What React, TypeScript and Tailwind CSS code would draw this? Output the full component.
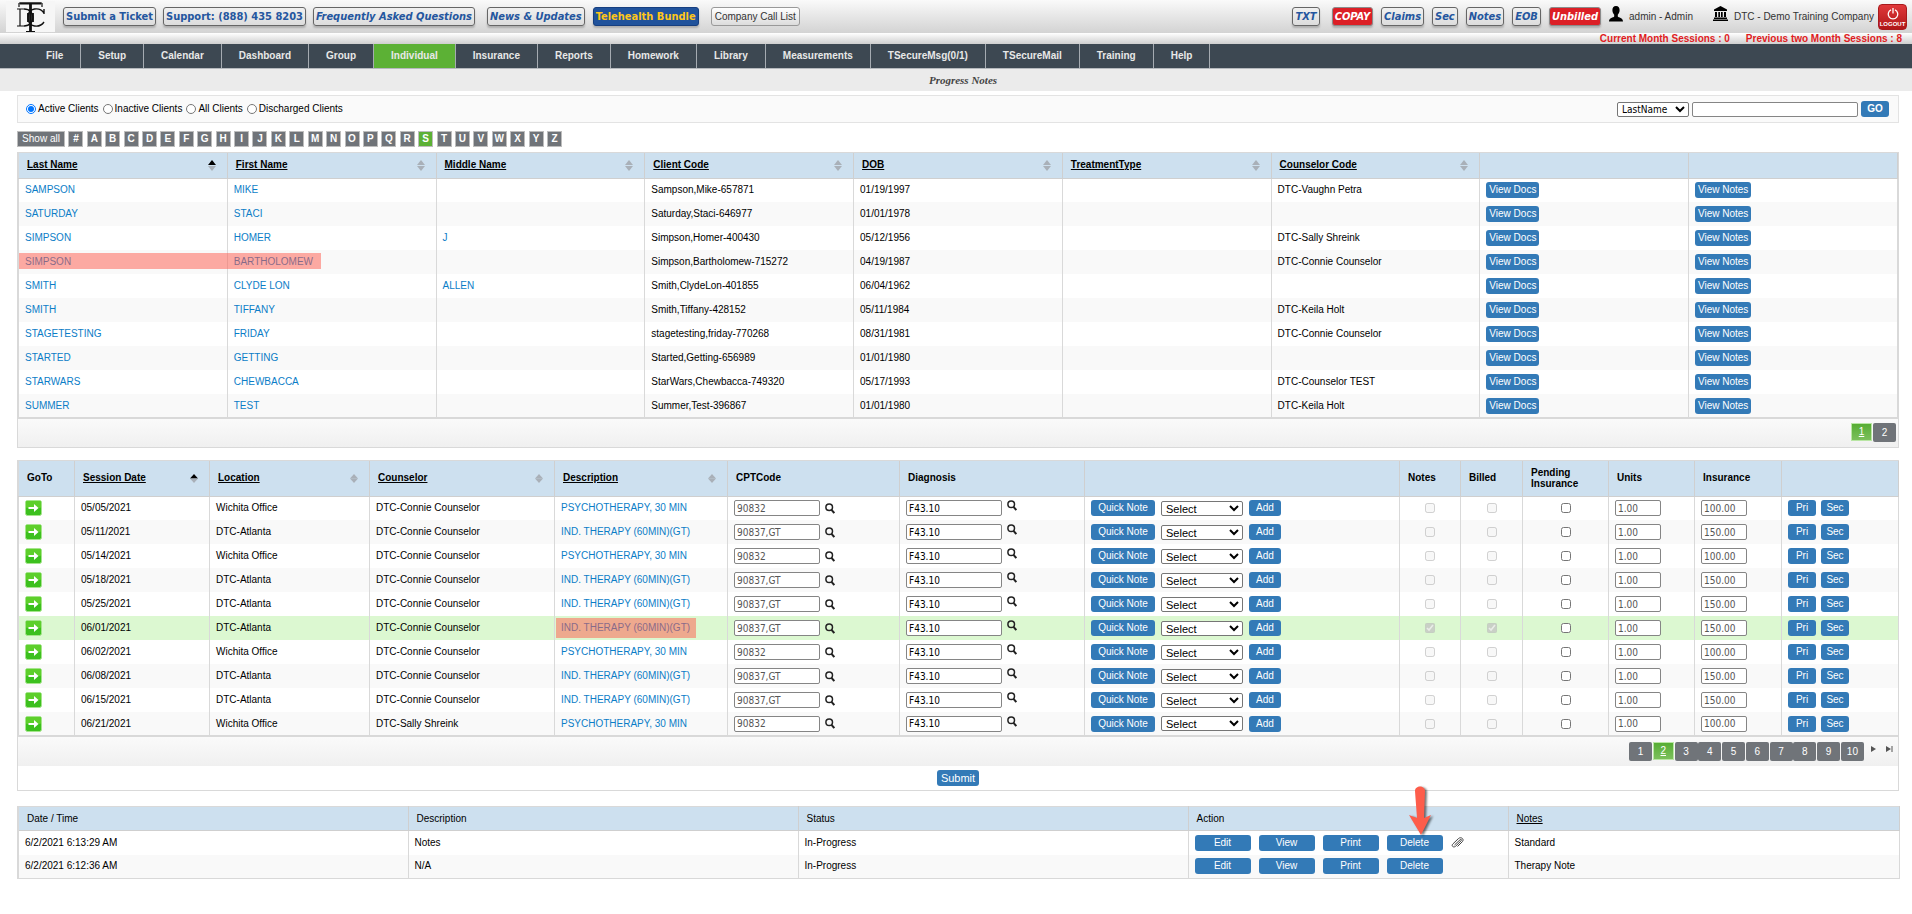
import React from 'react';
import clsx from 'clsx';

const NAV_ITEMS = [
  'File', 'Setup', 'Calendar', 'Dashboard', 'Group', 'Individual', 'Insurance', 'Reports',
  'Homework', 'Library', 'Measurements', 'TSecureMsg(0/1)', 'TSecureMail', 'Training', 'Help',
];

const LETTERS = '#ABCDEFGHIJKLMNOPQRSTUVWXYZ'.split('');

interface Client {
  last: string;
  first: string;
  middle?: string;
  code: string;
  dob: string;
  counselor?: string;
  marked?: boolean;
}

const CLIENTS: Client[] = [
  { last: 'SAMPSON', first: 'MIKE', code: 'Sampson,Mike-657871', dob: '01/19/1997', counselor: 'DTC-Vaughn Petra' },
  { last: 'SATURDAY', first: 'STACI', code: 'Saturday,Staci-646977', dob: '01/01/1978' },
  { last: 'SIMPSON', first: 'HOMER', middle: 'J', code: 'Simpson,Homer-400430', dob: '05/12/1956', counselor: 'DTC-Sally Shreink' },
  { last: 'SIMPSON', first: 'BARTHOLOMEW', code: 'Simpson,Bartholomew-715272', dob: '04/19/1987', counselor: 'DTC-Connie Counselor', marked: true },
  { last: 'SMITH', first: 'CLYDE LON', middle: 'ALLEN', code: 'Smith,ClydeLon-401855', dob: '06/04/1962' },
  { last: 'SMITH', first: 'TIFFANY', code: 'Smith,Tiffany-428152', dob: '05/11/1984', counselor: 'DTC-Keila Holt' },
  { last: 'STAGETESTING', first: 'FRIDAY', code: 'stagetesting,friday-770268', dob: '08/31/1981', counselor: 'DTC-Connie Counselor' },
  { last: 'STARTED', first: 'GETTING', code: 'Started,Getting-656989', dob: '01/01/1980' },
  { last: 'STARWARS', first: 'CHEWBACCA', code: 'StarWars,Chewbacca-749320', dob: '05/17/1993', counselor: 'DTC-Counselor TEST' },
  { last: 'SUMMER', first: 'TEST', code: 'Summer,Test-396867', dob: '01/01/1980', counselor: 'DTC-Keila Holt' },
];

const PSYCH = { description: 'PSYCHOTHERAPY, 30 MIN', cpt: '90832', amount: '100.00' };
const IND = { description: 'IND. THERAPY (60MIN)(GT)', cpt: '90837,GT', amount: '150.00' };

const SESSIONS = [
  { date: '05/05/2021', location: 'Wichita Office', counselor: 'DTC-Connie Counselor', ...PSYCH },
  { date: '05/11/2021', location: 'DTC-Atlanta', counselor: 'DTC-Connie Counselor', ...IND },
  { date: '05/14/2021', location: 'Wichita Office', counselor: 'DTC-Connie Counselor', ...PSYCH },
  { date: '05/18/2021', location: 'DTC-Atlanta', counselor: 'DTC-Connie Counselor', ...IND },
  { date: '05/25/2021', location: 'DTC-Atlanta', counselor: 'DTC-Connie Counselor', ...IND },
  { date: '06/01/2021', location: 'DTC-Atlanta', counselor: 'DTC-Connie Counselor', ...IND, selected: true },
  { date: '06/02/2021', location: 'Wichita Office', counselor: 'DTC-Connie Counselor', ...PSYCH },
  { date: '06/08/2021', location: 'DTC-Atlanta', counselor: 'DTC-Connie Counselor', ...IND },
  { date: '06/15/2021', location: 'DTC-Atlanta', counselor: 'DTC-Connie Counselor', ...IND },
  { date: '06/21/2021', location: 'Wichita Office', counselor: 'DTC-Sally Shreink', ...PSYCH },
];

const NOTES = [
  { time: '6/2/2021 6:13:29 AM', description: 'Notes', status: 'In-Progress', type: 'Standard', attachment: true },
  { time: '6/2/2021 6:12:36 AM', description: 'N/A', status: 'In-Progress', type: 'Therapy Note', attachment: false },
];

const cell = 'border-r border-[#d9d9d9] px-[6px] py-0 whitespace-nowrap';
const head = 'border-r border-b border-[#cfcfcf] pl-2 pr-[11px] text-left whitespace-nowrap';
const field = 'h-4 rounded-[2px] border border-[#858585] bg-white px-[2px] font-["DejaVu_Sans_Condensed",sans-serif] text-[10px] leading-3';

const Btn: React.FC<{ className?: string; children: React.ReactNode }> = ({ className, children }) => (
  <button
    type="button"
    className={clsx('inline-flex h-4 items-center justify-center rounded-[3px] bg-[#337ab7] text-[10px] text-white', className)}
  >
    {children}
  </button>
);

const HeaderButton: React.FC<{ className?: string; children: React.ReactNode }> = ({
  className = 'border-[#666] text-[#24569f]',
  children,
}) => (
  <button
    type="button"
    className={clsx(
      'h-[19px] rounded-[3px] border px-[2px] font-["DejaVu_Sans_Condensed",sans-serif] text-[11px] leading-4 font-bold whitespace-nowrap shadow-[0_2px_2px_rgba(0,0,0,0.2)]',
      className,
    )}
  >
    {children}
  </button>
);

const SortIcon: React.FC<{ active?: boolean; tight?: boolean }> = ({ active, tight }) => (
  <svg width="8" height="11" viewBox="0 0 8 11" className="shrink-0">
    <path d={tight ? 'M4 1L8 5.5H0z' : 'M4 0L8 5H0z'} fill={active ? '#000' : '#a9b0b8'} />
    <path d={tight ? 'M4 10L8 5.5H0z' : 'M4 11L8 6H0z'} fill="#a9b0b8" />
  </svg>
);

const SortHead: React.FC<{ label: string; active?: boolean; tight?: boolean }> = ({ label, active, tight }) => (
  <th scope="col" className={head}>
    <div className="flex items-center justify-between">
      <a href="#" className="font-bold underline underline-offset-1">{label}</a>
      <SortIcon active={active} tight={tight} />
    </div>
  </th>
);

const SearchIcon = () => (
  <svg width="10" height="11" viewBox="0 0 10 11" fill="none" stroke="#222">
    <circle cx="4.2" cy="4.2" r="3.3" strokeWidth="1.5" />
    <path d="M6.5 6.8L9.3 10" strokeWidth="2" />
  </svg>
);

const GoIcon = () => (
  <svg width="17" height="16" viewBox="0 0 17 16">
    <rect x="0.5" y="0.5" width="16" height="15" rx="2" fill="#3cc01e" stroke="#a5e58c" />
    <rect x="1" y="1" width="15" height="7" rx="1" fill="#5dcf2b" />
    <path d="M3.5 7H9V4L13.5 8L9 12V9H3.5z" fill="#fff" />
  </svg>
);

const PageButton: React.FC<{ page: number; current?: boolean }> = ({ page, current }) => (
  <button
    type="button"
    aria-current={current ? 'page' : undefined}
    className={clsx(
      'flex items-center justify-center text-[10px] text-white',
      current
        ? 'h-[18px] w-[21px] border border-[#b9e6a4] bg-linear-to-b from-[#56ad33] to-[#7cc05c] underline underline-offset-1'
        : 'h-[19px] w-[23px] rounded-[2px] bg-[#707479]',
    )}
  >
    {page}
  </button>
);

const Header = () => (
  <header>
    <div className="flex h-[33px] items-center justify-between bg-linear-to-b from-[#fafafa] to-[#d3d3d3] pr-[5px] pl-[6px]">
      <div className="flex items-center">
        <svg width="49" height="31" viewBox="0 0 49 31" className="mr-2 bg-[#f6f6f6]">
          <g fill="none" stroke="#111">
            <path d="M13 2H36M13 2V6M36 2V6M20 30.500H29" strokeWidth="1.2" />
            <path d="M14 2.500H35" strokeWidth="2" />
            <path d="M24.500 2V30" strokeWidth="2.800" />
            <path d="M11 8H18M11 25H18M14 8V25" strokeWidth="1.2" />
            <path d="M18 8C30 8 30 25 18 25" strokeWidth="1.400" />
            <path d="M38 12C34 6 22 6 22 16.500C22 27 34 27 38 21M38 8V13" strokeWidth="1.400" />
            <path d="M27 12V21M22 12V21" strokeWidth="1.800" />
          </g>
        </svg>
        <div className="flex items-center gap-[7px]">
          <HeaderButton>Submit a Ticket</HeaderButton>
          <HeaderButton>Support: (888) 435 8203</HeaderButton>
          <HeaderButton className="border-[#666] text-[#24569f] italic">Frequently Asked Questions</HeaderButton>
        </div>
        <div className="ml-3 flex items-center gap-2">
          <HeaderButton className="border-[#666] text-[#24569f] italic">News &amp; Updates</HeaderButton>
          <HeaderButton className="border-[#173f80] bg-[#21539c] text-[#ffc61a]">Telehealth Bundle</HeaderButton>
          <button
            type="button"
            className="ml-1 h-[19px] rounded-[3px] border border-[#999] bg-linear-to-b from-white to-[#dcdcdc] px-[3px] text-[10px] whitespace-nowrap text-[#333]"
          >
            Company Call List
          </button>
        </div>
      </div>
      <div className="flex items-center gap-2">
        <HeaderButton className="mr-1 border-[#666] text-[#24569f] italic">TXT</HeaderButton>
        <HeaderButton className="border-[#8b8b8b] bg-[#dc1f26] text-white italic">COPAY</HeaderButton>
        <HeaderButton className="border-[#666] text-[#24569f] italic">Claims</HeaderButton>
        <HeaderButton className="border-[#666] text-[#24569f] italic">Sec</HeaderButton>
        <HeaderButton className="border-[#666] text-[#24569f] italic">Notes</HeaderButton>
        <HeaderButton className="border-[#666] text-[#24569f] italic">EOB</HeaderButton>
        <HeaderButton className="border-[#8b8b8b] bg-[#dc1f26] text-white italic">Unbilled</HeaderButton>
        <div className="flex items-center gap-[6px] text-[10px] text-[#333]">
          <svg width="14" height="16" viewBox="0 0 14 16" className="mb-[6px]">
            <path d="M7 0C9.500 0 10.800 1.800 10.600 4.500C10.500 6.500 9.500 8 8.800 8.800V10.500C9.500 11.800 14 11.500 14 15.500H0C0 11.500 4.500 11.800 5.200 10.500V8.800C4.500 8 3.500 6.500 3.400 4.500C3.200 1.800 4.500 0 7 0z" />
          </svg>
          admin - Admin
        </div>
        <div className="ml-3 flex items-center gap-[6px] text-[10px] text-[#333]">
          <svg width="15" height="15" viewBox="0 0 15 15" className="mb-[6px]">
            <path d="M7.500 0L14 3.500V5H1V3.500zM2 6H4V11H2zM5.300 6H7V11H5.300zM8 6H9.700V11H8zM11 6H13V11H11zM1 11.500H14V13H1zM0 13.500H15V15H0z" />
          </svg>
          DTC - Demo Training Company
        </div>
        <button
          type="button"
          className="-ml-1 flex h-[26px] w-[29px] flex-col items-center justify-between rounded-[4px] border border-[#a81a1c] bg-linear-to-b from-[#e0383a] to-[#b01618] pt-[3px] pb-[2px] text-white"
        >
          <svg width="12" height="12" viewBox="0 0 12 12" fill="none" stroke="#fff" strokeWidth="1.300">
            <path d="M4 1.800A4.800 4.800 0 1 0 8 1.800M6 0V5.500" />
          </svg>
          <span className="text-[6px] leading-[6px] font-bold">LOGOUT</span>
        </button>
      </div>
    </div>
    <div className="flex h-[11px] items-center justify-end gap-4 bg-linear-to-b from-white to-[#cfcfcf] pr-[10px] text-[10px] leading-[11px] font-bold text-[#e01b22]">
      <span>Current Month Sessions : 0</span>
      <span>Previous two Month Sessions : 8</span>
    </div>
  </header>
);

const NavBar = () => (
  <nav className="flex h-[25px] border-b border-[#b5b9bd] bg-[#3d4852] pl-[29px]">
    {NAV_ITEMS.map((item) => (
      <a
        key={item}
        href="#"
        className={clsx(
          'flex items-center border-r border-[#a5abb1] px-[17px] text-[10px] font-bold text-[#e8e8e8]',
          item === 'Individual' && 'bg-[#5cb135]',
        )}
      >
        {item}
      </a>
    ))}
  </nav>
);

const FilterBar = () => (
  <div className="flex h-7 items-center justify-between border border-[#e3e3e3] bg-[#fafafa] pr-[9px] pl-2">
    <div className="flex items-center gap-1">
      {['Active Clients', 'Inactive Clients', 'All Clients', 'Discharged Clients'].map((label, i) => (
        <label key={label} className="flex items-center gap-[2px]">
          <input type="radio" name="clientStatus" defaultChecked={i === 0} className="size-[10px]" />
          {label}
        </label>
      ))}
    </div>
    <div className="flex items-center gap-[3px]">
      <select aria-label="Search by" className='h-[15px] w-[72px] rounded-[2px] border border-[#767676] bg-white font-["DejaVu_Sans_Condensed",sans-serif] text-[10px]'>
        <option>LastName</option>
      </select>
      <input aria-label="Search text" className="h-[15px] w-[166px] rounded-[2px] border border-[#858585] bg-white px-1" />
      <Btn className="w-7 font-bold">GO</Btn>
    </div>
  </div>
);

const ClientTable = () => (
  <section className="border border-[#d9d9d9]">
    <table className="w-full table-fixed border-b-2 border-l border-[#d9d9d9]">
      <thead>
        <tr className="h-[25px] bg-[#cde0ef]">
          <SortHead label="Last Name" active />
          <SortHead label="First Name" />
          <SortHead label="Middle Name" />
          <SortHead label="Client Code" />
          <SortHead label="DOB" />
          <SortHead label="TreatmentType" />
          <SortHead label="Counselor Code" />
          <th className={head} />
          <th className={head} />
        </tr>
      </thead>
      <tbody>
        {CLIENTS.map((c) => (
          <tr key={c.code} className="h-6 even:bg-[#f9f9f9]">
            <td className={clsx(cell, 'relative')}>
              <a href="#" className="text-[#0b7dc7]">{c.last}</a>
              {c.marked && (
                <span className="pointer-events-none absolute top-[3px] left-0 z-10 h-4 w-[302px] bg-[#ff5a4b]/50" />
              )}
            </td>
            <td className={cell}><a href="#" className="text-[#0b7dc7]">{c.first}</a></td>
            <td className={cell}><a href="#" className="text-[#0b7dc7]">{c.middle}</a></td>
            <td className={cell}>{c.code}</td>
            <td className={cell}>{c.dob}</td>
            <td className={cell} />
            <td className={cell}>{c.counselor}</td>
            <td className={clsx(cell, 'leading-none')}><Btn className="w-[53px]">View Docs</Btn></td>
            <td className={clsx(cell, 'leading-none')}><Btn className="w-[56px]">View Notes</Btn></td>
          </tr>
        ))}
      </tbody>
    </table>
    <div className="flex h-7 items-start justify-end gap-[1px] bg-linear-to-b from-[#fafafa] to-[#f0f0f0] pt-1 pr-[2px]">
      <PageButton page={1} current />
      <PageButton page={2} />
    </div>
  </section>
);

const SessionTable = () => (
  <section className="border border-[#d9d9d9]">
    <table className="w-full table-fixed border-b-2 border-l border-[#d9d9d9]">
      <colgroup>
        <col className="w-[56px]" />
        <col className="w-[135px]" />
        <col className="w-[160px]" />
        <col className="w-[185px]" />
        <col className="w-[173px]" />
        <col className="w-[172px]" />
        <col className="w-[185px]" />
        <col className="w-[315px]" />
        <col className="w-[61px]" />
        <col className="w-[62px]" />
        <col className="w-[86px]" />
        <col className="w-[86px]" />
        <col className="w-[87px]" />
        <col className="w-[117px]" />
      </colgroup>
      <thead>
        <tr className="h-[35px] bg-[#cde0ef]">
          <th scope="col" className={head}>GoTo</th>
          <SortHead label="Session Date" active tight />
          <SortHead label="Location" tight />
          <SortHead label="Counselor" tight />
          <SortHead label="Description" tight />
          <th scope="col" className={head}>CPTCode</th>
          <th scope="col" className={head}>Diagnosis</th>
          <th className={head} />
          <th scope="col" className={head}>Notes</th>
          <th scope="col" className={head}>Billed</th>
          <th scope="col" className={clsx(head, 'leading-[11px]')}>Pending<br />Insurance</th>
          <th scope="col" className={head}>Units</th>
          <th scope="col" className={head}>Insurance</th>
          <th className={head} />
        </tr>
      </thead>
      <tbody>
        {SESSIONS.map((s) => (
          <tr
            key={s.date}
            className={clsx('h-6', s.selected ? 'bg-[#dcf8d1]' : 'even:bg-[#f9f9f9]')}
          >
            <td className={cell}>
              <button type="button" aria-label={`Go to ${s.date}`} className="block"><GoIcon /></button>
            </td>
            <td className={cell}>{s.date}</td>
            <td className={cell}>{s.location}</td>
            <td className={cell}>{s.counselor}</td>
            <td className={clsx(cell, 'relative')}>
              <a href="#" className="text-[#0b7dc7]">{s.description}</a>
              {s.selected && (
                <span className="pointer-events-none absolute top-[2px] left-[1px] h-5 w-[140px] bg-[#ff5a4b]/50" />
              )}
            </td>
            <td className={cell}>
              <div className="flex items-center gap-[5px]">
                <input aria-label="CPT code" defaultValue={s.cpt} className={clsx(field, 'w-[86px] text-[#555]')} />
                <button type="button" aria-label="Find CPT code"><SearchIcon /></button>
              </div>
            </td>
            <td className={cell}>
              <div className="flex items-start gap-[5px]">
                <input aria-label="Diagnosis" defaultValue="F43.10" className={clsx(field, 'w-[96px] text-black')} />
                <button type="button" aria-label="Find diagnosis"><SearchIcon /></button>
              </div>
            </td>
            <td className={cell}>
              <div className="flex items-center gap-[6px]">
                <Btn className="w-16">Quick Note</Btn>
                <select aria-label="Note template" className="h-[15px] w-[82px] rounded-[2px] border border-[#767676] bg-white text-[11px] leading-3">
                  <option>Select</option>
                </select>
                <Btn className="w-8">Add</Btn>
              </div>
            </td>
            <td className={cell}>
              <input type="checkbox" aria-label="Notes" disabled defaultChecked={s.selected} className="mx-auto block size-[10px]" />
            </td>
            <td className={cell}>
              <input type="checkbox" aria-label="Billed" disabled defaultChecked={s.selected} className="mx-auto block size-[10px]" />
            </td>
            <td className={cell}>
              <input type="checkbox" aria-label="Pending insurance" className="mx-auto block size-[10px]" />
            </td>
            <td className={cell}>
              <input aria-label="Units" defaultValue="1.00" className={clsx(field, 'block w-[46px] text-[#555]')} />
            </td>
            <td className={cell}>
              <input aria-label="Insurance" defaultValue={s.amount} className={clsx(field, 'block w-[46px] text-[#555]')} />
            </td>
            <td className={cell}>
              <div className="flex gap-[5px]">
                <Btn className="w-[28px]">Pri</Btn>
                <Btn className="w-[28px]">Sec</Btn>
              </div>
            </td>
          </tr>
        ))}
      </tbody>
    </table>
    <div className="flex h-[29px] items-start justify-end bg-linear-to-b from-[#fafafa] to-[#f0f0f0] pt-[5px] pr-[5px]">
      <div className="flex w-[235px] justify-between">
        {[1, 2, 3, 4, 5, 6, 7, 8, 9, 10].map((page) => (
          <PageButton key={page} page={page} current={page === 2} />
        ))}
      </div>
      <button type="button" aria-label="Next page" className="mt-1 ml-[7px]">
        <svg width="5" height="6" viewBox="0 0 5 6"><path d="M0 0L5 3L0 6z" fill="#555" /></svg>
      </button>
      <button type="button" aria-label="Last page" className="mt-1 ml-[10px]">
        <svg width="7" height="6" viewBox="0 0 7 6"><path d="M0 0L5 3L0 6zM5.500 0H6.500V6H5.500z" fill="#555" /></svg>
      </button>
    </div>
    <div className="flex h-6 items-center justify-center">
      <Btn className="w-[42px] text-[11px]">Submit</Btn>
    </div>
  </section>
);

const PointerArrow = () => (
  <svg
    width="28"
    height="52"
    viewBox="0 0 28 52"
    className="pointer-events-none absolute bottom-[14px] left-[21px] drop-shadow-[2px_1px_1px_rgba(0,0,0,0.55)]"
  >
    <path d="M7 6C7 0 17 0 17 6L16 33L23 30L13 50L1 30L9 33z" fill="#fd5d4b" />
  </svg>
);

const NotesTable = () => (
  <table className="w-full table-fixed border border-l-2 border-[#d9d9d9]">
    <colgroup>
      <col className="w-[390px]" />
      <col className="w-[390px]" />
      <col className="w-[390px]" />
      <col className="w-[320px]" />
      <col className="w-[391px]" />
    </colgroup>
    <thead>
      <tr className="h-6 bg-[#cde0ef]">
        <th scope="col" className={clsx(head, 'font-normal')}>Date / Time</th>
        <th scope="col" className={clsx(head, 'font-normal')}>Description</th>
        <th scope="col" className={clsx(head, 'font-normal')}>Status</th>
        <th scope="col" className={clsx(head, 'font-normal')}>Action</th>
        <th scope="col" className={clsx(head, 'font-normal')}>
          <a href="#" className="underline underline-offset-1">Notes</a>
        </th>
      </tr>
    </thead>
    <tbody>
      {NOTES.map((n) => (
        <tr key={n.time} className="h-6 even:bg-[#f9f9f9]">
          <td className={cell}>{n.time}</td>
          <td className={cell}>{n.description}</td>
          <td className={cell}>{n.status}</td>
          <td className={cell}>
            <div className="flex items-center gap-2">
              <Btn className="w-14">Edit</Btn>
              <Btn className="w-14">View</Btn>
              <Btn className="w-14">Print</Btn>
              <div className="relative flex">
                <Btn className="w-14">Delete</Btn>
                {n.attachment && <PointerArrow />}
              </div>
              {n.attachment && (
                <svg width="13" height="11" viewBox="0 0 13 11" fill="none" stroke="#444">
                  <path d="M3.500 8L9 2.800C10 1.900 11 2.800 10.200 3.700L4.500 9.300C2.500 11 0 9 1.800 7L7.500 1.500C9.800 -0.500 13.500 1.800 11.500 4.500L6.500 9.500" />
                </svg>
              )}
            </div>
          </td>
          <td className={cell}>{n.type}</td>
        </tr>
      ))}
    </tbody>
  </table>
);

export default function App() {
  return (
    <div className='min-h-screen bg-white font-["Liberation_Sans",Arial,sans-serif] text-[10px] leading-3 text-black'>
      <Header />
      <NavBar />
      <h1 className='flex h-[22px] items-center justify-center bg-[#ebebeb] pl-[14px] font-["Liberation_Serif",serif] text-[11px] font-semibold text-[#444] italic'>
        Progress Notes
      </h1>
      <main className="flex flex-col pt-1 pr-[13px] pl-[17px]">
        <FilterBar />
        <div className="mt-2 mb-[5px] flex w-[545px] justify-between">
          <button type="button" className="h-4 w-12 border border-[#bdbdbd] bg-[#707479] text-white">Show all</button>
          {LETTERS.map((letter) => (
            <button
              key={letter}
              type="button"
              className={clsx(
                'h-4 w-[15px] border border-[#bdbdbd] font-bold text-white',
                letter === 'S' ? 'bg-[#5cb135]' : 'bg-[#707479]',
              )}
            >
              {letter}
            </button>
          ))}
        </div>
        <ClientTable />
        <div className="mt-3"><SessionTable /></div>
        <div className="mt-[15px]"><NotesTable /></div>
      </main>
    </div>
  );
}
